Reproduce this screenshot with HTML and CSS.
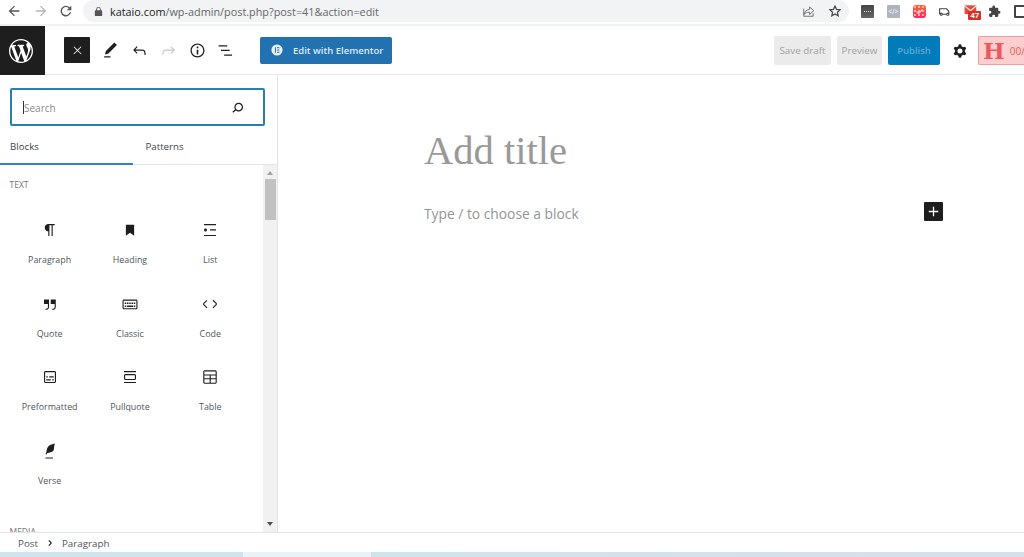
FILE: index.html
```html
<!DOCTYPE html>
<html lang="en">
<head>
    <meta charset="UTF-8">
    <title>Add New Post</title>
    <link rel="stylesheet" href="styles.css">
</head>
<body>

<!-- browser toolbar -->
<div class="browser-bar">
    <div class="nav-buttons">
        <svg class="nav-icon" viewBox="0 0 24 24"><path d="M20 11H7.8l5.6-5.6L12 4l-8 8 8 8 1.4-1.4L7.8 13H20z"/></svg>
        <svg class="nav-icon nav-off" viewBox="0 0 24 24"><path d="M4 11h12.2l-5.6-5.6L12 4l8 8-8 8-1.4-1.4 5.6-5.6H4z"/></svg>
        <svg class="nav-icon nav-reload" viewBox="0 0 24 24"><path d="M17.6 6.4A8 8 0 1 0 19.7 14h-2.1a6 6 0 1 1-1.4-6.2L13 11h7V4z"/></svg>
    </div>
    <div class="omnibox">
        <svg class="lock" viewBox="0 0 24 24"><path d="M18 9h-1V7a5 5 0 0 0-10 0v2H6a2 2 0 0 0-2 2v9a2 2 0 0 0 2 2h12a2 2 0 0 0 2-2v-9a2 2 0 0 0-2-2zM9 7a3 3 0 0 1 6 0v2H9z"/></svg>
        <span class="url"><span class="url-host">kataio.com</span>/wp-admin/post.php?post=41&amp;action=edit</span>
        <svg class="omni-icon share" viewBox="0 0 24 24"><path d="M13 5v4C7 10 4 14 3.5 18c2.5-3 5-4 9.5-4v4l7-6.500z M3 8v13h16v-5" fill="none" stroke="#5f6368" stroke-width="1.5"/></svg>
        <svg class="omni-icon" viewBox="0 0 24 24"><path d="M12 3.5l2.6 5.7 6.2.7-4.600 4.200 1.300 6.100-5.500-3.100-5.500 3.100 1.300-6.100-4.600-4.200 6.200-.7z" fill="none" stroke="#444" stroke-width="2"/></svg>
    </div>
    <div class="extensions">
        <span class="ext ext-dark"><i></i></span>
        <span class="ext ext-code">&lt;/&gt;</span>
        <span class="ext ext-red">
            <svg viewBox="0 0 13 13"><path d="M3.5 6.5l2 2 4-4" fill="none" stroke="#ffd9c9" stroke-width="1.2"/></svg>
        </span>
        <svg class="ext-svg" viewBox="0 0 24 24"><path d="M3 17V7h13l4 5v5M8 17h8" fill="none" stroke="#444" stroke-width="2"/><circle cx="6" cy="17" r="2" fill="none" stroke="#444" stroke-width="2"/><circle cx="18" cy="17" r="2" fill="none" stroke="#444" stroke-width="2"/></svg>
        <span class="ext-mail">
            <svg viewBox="0 0 24 20"><path d="M1 2h20v15H1z" fill="#e8493c"/><path d="M1 3l10 8 10-8" fill="none" stroke="#fff" stroke-width="2"/></svg>
            <b class="mail-count">47</b>
        </span>
        <svg class="ext-svg ext-puzzle" viewBox="0 0 24 24"><path fill="#444" d="M20.5 11H19V7a2 2 0 0 0-2-2h-4V3.5a2.5 2.5 0 0 0-5 0V5H4a2 2 0 0 0-2 2v3.8h1.5a2.700 2.700 0 0 1 0 5.400H2V20a2 2 0 0 0 2 2h3.800v-1.500a2.700 2.700 0 0 1 5.400 0V22H17a2 2 0 0 0 2-2v-4h1.500a2.500 2.500 0 0 0 0-5z"/></svg>
        <span class="ext-window"></span>
    </div>
</div>

<!-- editor top bar -->
<header class="editor-header">
    <a class="wp-logo">
        <svg viewBox="0 0 20 20"><path fill="#fff" d="M20 10c0-5.510-4.490-10-10-10C4.480 0 0 4.490 0 10c0 5.520 4.480 10 10 10 5.510 0 10-4.480 10-10zM7.780 15.370L4.370 6.220c.55-.02 1.170-.08 1.170-.08.5-.06.44-1.130-.06-1.110 0 0-1.450.11-2.370.11-.18 0-.37 0-.58-.01C4.120 2.690 6.870 1.110 10 1.110c2.330 0 4.450.87 6.050 2.340-.68-.11-1.650.39-1.650 1.580 0 .74.45 1.360.9 2.100.35.61.55 1.360.55 2.460 0 1.490-1.400 5-1.400 5l-3.030-8.370c.54-.02.82-.17.82-.17.5-.05.44-1.250-.06-1.220 0 0-1.440.12-2.380.12-.87 0-2.330-.12-2.330-.12-.5-.03-.56 1.200-.06 1.220l.92.08 1.260 3.410zM17.410 10c.24-.64.74-1.870.43-4.250.7 1.290 1.050 2.710 1.050 4.250 0 3.290-1.730 6.240-4.400 7.780.97-2.590 1.940-5.200 2.920-7.780zM6.100 18.090C3.120 16.650 1.110 13.530 1.110 10c0-1.300.23-2.480.72-3.590C3.250 10.300 4.670 14.200 6.100 18.090zm4.030-6.630l2.580 6.980c-.86.29-1.760.45-2.710.45-.79 0-1.570-.11-2.290-.33.81-2.380 1.620-4.740 2.420-7.100z"/></svg>
    </a>
    <div class="header-tools">
        <button class="close-btn">
            <svg viewBox="0 0 24 24"><path fill="#fff" d="M13 11.800l6.100-6.300-1-1-6.100 6.200-6.100-6.200-1 1 6.100 6.300-6.500 6.200 1 1 6.500-6.300 6.500 6.300 1-1z"/></svg>
        </button>
        <svg class="tool-icon" viewBox="0 0 24 24"><path d="M20.100 5.100L16.900 2 6.200 12.700l-1.300 4.400 4.500-1.300L20.100 5.100zM4 20.800h8v-1.500H4v1.500z"/></svg>
        <svg class="tool-icon" viewBox="0 0 24 24"><path d="M18.300 11.700c-.6-.6-1.400-.9-2.300-.9H6.700l2.900-3.300-1.100-1-4.500 5L8.500 16l1-1-2.700-2.700H16c.5 0 .9.2 1.300.5 1 1 1 3.400 1 4.500v.3h1.500v-.2c0-1.500 0-4.300-1.500-5.700z"/></svg>
        <svg class="tool-icon tool-off" viewBox="0 0 24 24"><path d="M15.600 6.500l-1.100 1 2.900 3.300H8c-.9 0-1.700.3-2.300.9-1.400 1.500-1.400 4.200-1.400 5.600v.2h1.500v-.3c0-1.100 0-3.500 1-4.500.3-.3.7-.5 1.300-.5h9.200L14.500 15l1.100 1.100 4.600-4.600-4.600-5z"/></svg>
        <svg class="tool-icon" viewBox="0 0 24 24"><path d="M12 3.200c-4.800 0-8.800 3.900-8.800 8.800 0 4.800 3.900 8.800 8.800 8.800 4.800 0 8.800-3.900 8.800-8.800 0-4.800-4-8.800-8.800-8.800zm0 16c-4 0-7.200-3.300-7.200-7.200C4.800 8 8 4.800 12 4.800s7.200 3.300 7.200 7.200c0 4-3.200 7.200-7.200 7.200zM11 17h2v-6h-2v6zm0-8h2V7h-2v2z"/></svg>
        <svg class="tool-icon tool-list" viewBox="0 0 24 24"><path d="M2 5.500h11V7H2zM5 11.200h11v1.500H5zM9 17h10v1.500H9z"/></svg>
        <button class="elementor-btn">
            <svg viewBox="0 0 20 20"><path fill="#eaf3fa" fill-rule="evenodd" d="M10 2a8 8 0 1 0 0 16 8 8 0 0 0 0-16zM7 6h1.500v8H7zm3 0h3.500v1.500H10zm0 3.200h3.500v1.500H10zm0 3.300h3.500V14H10z"/></svg>
            Edit with Elementor
        </button>
    </div>
    <div class="header-actions">
        <button class="btn-grey btn-save">Save draft</button>
        <button class="btn-grey btn-preview">Preview</button>
        <button class="btn-publish">Publish</button>
        <svg class="cog" viewBox="0 0 24 24"><path fill-rule="evenodd" d="M10.289 4.836A1 1 0 0111.275 4h1.306a1 1 0 01.987.836l.244 1.466c.787.26 1.503.679 2.108 1.218l1.393-.522a1 1 0 011.216.437l.653 1.130a1 1 0 01-.23 1.273l-1.148.944a6.025 6.025 0 010 2.435l1.149.946a1 1 0 01.23 1.272l-.653 1.130a1 1 0 01-1.216.437l-1.394-.522c-.605.54-1.320.958-2.108 1.218l-.244 1.466a1 1 0 01-.987.836h-1.306a1 1 0 01-.986-.836l-.244-1.466a5.995 5.995 0 01-2.108-1.218l-1.394.522a1 1 0 01-1.217-.436l-.653-1.131a1 1 0 01.23-1.272l1.149-.946a6.026 6.026 0 010-2.435l-1.148-.944a1 1 0 01-.23-1.272l.653-1.131a1 1 0 011.217-.437l1.393.522a5.994 5.994 0 012.108-1.218l.244-1.466zM14.929 12a3 3 0 11-6 0 3 3 0 016 0z"/></svg>
        <div class="h-badge"><span class="h-letter">H</span><span class="h-count">00/</span></div>
    </div>
</header>

<div class="editor-body">
    <!-- block inserter -->
    <aside class="inserter">
        <div class="search-box">
            <span class="caret"></span>
            <span class="search-text">Search</span>
            <svg class="search-icon" viewBox="0 0 24 24"><path d="M13.500 6C10.500 6 8 8.500 8 11.500c0 1.100.3 2.100.9 3l-3.400 3 1 1.100 3.400-2.900c1 .9 2.200 1.400 3.600 1.400 3 0 5.500-2.500 5.500-5.500C19 8.500 16.500 6 13.500 6zm0 9.500c-2.200 0-4-1.800-4-4s1.800-4 4-4 4 1.800 4 4-1.800 4-4 4z"/></svg>
        </div>
        <div class="tabs">
            <div class="tab tab-active">Blocks</div>
            <div class="tab">Patterns</div>
        </div>
        <div class="block-panel">
            <div class="block-list">
                <div class="group-title">TEXT</div>
                <div class="block-grid">
                    <div class="block-item">
                        <svg viewBox="0 0 24 24"><path d="M18.300 4H9.900v-.1l-.9.2c-2.300.4-4 2.400-4 4.800s1.700 4.400 4 4.800l.7.1V20h1.500V5.500h2.900V20h1.500V5.500h2.700V4z"/></svg>
                        <span>Paragraph</span>
                    </div>
                    <div class="block-item">
                        <svg viewBox="0 0 24 24"><path d="M6.500 5h11v14.500L12 15.600l-5.500 3.900z"/></svg>
                        <span>Heading</span>
                    </div>
                    <div class="block-item">
                        <svg viewBox="0 0 24 24"><path d="M4 4v1.500h16V4H4zm8 8.500h8V11h-8v1.500zM4 20h16v-1.500H4V20zm4-8c0-1.100-.9-2-2-2s-2 .9-2 2 .9 2 2 2 2-.9 2-2z"/></svg>
                        <span>List</span>
                    </div>
                    <div class="block-item">
                        <svg viewBox="0 0 24 24"><path d="M13 6v6h5.200v4c0 .8-.2 1.400-.5 1.700-.6.6-1.600.6-2.500.5h-.3v1.500h.5c1 0 2.300-.1 3.300-1 .6-.6 1-1.600 1-2.800V6H13zm-9 6h5.200v4c0 .8-.2 1.400-.5 1.700-.6.6-1.600.6-2.500.5h-.3v1.500h.5c1 0 2.300-.1 3.300-1 .6-.6 1-1.600 1-2.800V6H4v6z"/></svg>
                        <span>Quote</span>
                    </div>
                    <div class="block-item">
                        <svg viewBox="0 0 24 24"><path d="M20 6H4c-1.100 0-2 .9-2 2v9c0 1.100.9 2 2 2h16c1.100 0 2-.9 2-2V8c0-1.100-.9-2-2-2zm.5 11c0 .3-.2.5-.5.5H4c-.3 0-.5-.2-.5-.5V8c0-.3.2-.5.5-.5h16c.3 0 .5.2.5.5v9zM10 10H8v2h2v-2zm-5 2h2v-2H5v2zm8-2h-2v2h2v-2zm-5 6h8v-2H8v2zm6-4h2v-2h-2v2zm3 0h2v-2h-2v2zm0 4h2v-2h-2v2zM5 16h2v-2H5v2z"/></svg>
                        <span>Classic</span>
                    </div>
                    <div class="block-item">
                        <svg viewBox="0 0 24 24"><path d="M20.800 10.700l-4.300-4.300-1.100 1.100 4.300 4.300c.1.1.1.3 0 .4l-4.300 4.300 1.100 1.100 4.300-4.300c.7-.8.7-1.900 0-2.600zM4.200 11.800l4.300-4.300-1-1-4.300 4.300c-.7.7-.7 1.800 0 2.500l4.300 4.300 1.100-1.100-4.300-4.300c-.2-.1-.2-.3-.1-.4z"/></svg>
                        <span>Code</span>
                    </div>
                    <div class="block-item">
                        <svg viewBox="0 0 24 24"><path d="M18 4H6c-1.100 0-2 .9-2 2v12c0 1.100.9 2 2 2h12c1.100 0 2-.9 2-2V6c0-1.100-.9-2-2-2zm.5 14c0 .3-.2.5-.5.5H6c-.3 0-.5-.2-.5-.5V6c0-.3.2-.5.5-.5h12c.3 0 .5.2.5.5v12zM7 16.500h6V15H7v1.500zm4-4h6V11h-6v1.500zM9 11H7v1.500h2V11zm6 5.500h2V15h-2v1.500z"/></svg>
                        <span>Preformatted</span>
                    </div>
                    <div class="block-item">
                        <svg viewBox="0 0 24 24"><path d="M18 8H6c-1.100 0-2 .9-2 2v4c0 1.100.9 2 2 2h12c1.100 0 2-.9 2-2v-4c0-1.100-.9-2-2-2zm.5 6c0 .3-.2.5-.5.5H6c-.3 0-.5-.2-.5-.5v-4c0-.3.2-.5.5-.5h12c.3 0 .5.2.5.5v4zM4 4v1.500h16V4H4zm0 16h16v-1.500H4V20z"/></svg>
                        <span>Pullquote</span>
                    </div>
                    <div class="block-item">
                        <svg viewBox="0 0 24 24"><path d="M19 3H5c-1.100 0-2 .9-2 2v14c0 1.100.9 2 2 2h14c1.100 0 2-.9 2-2V5c0-1.100-.9-2-2-2zM5 4.500h14c.3 0 .5.2.5.5v3.500h-15V5c0-.3.2-.5.5-.5zm8 5.500h6.500v3.500H13V10zm-1.500 3.500h-7V10h7v3.500zm-7 5.500v-4h7v4.500H5c-.3 0-.5-.2-.5-.5zm14.500.5h-6V15h6.500v4c0 .3-.2.5-.5.5z"/></svg>
                        <span>Table</span>
                    </div>
                    <div class="block-item">
                        <svg viewBox="0 0 24 24"><path d="M17.800 2l-.9.3c-.1 0-3.600 1-5.200 2.100C10 5.500 9.300 6.500 8.900 7.100c-.6.9-1.700 4.700-1.700 6.300l-.9 2.300c-.2.400 0 .8.4 1 .1 0 .2.100.3.100.3 0 .6-.2.7-.5l.6-1.500c.3 0 .7-.1 1.200-.2.700-.1 1.400-.3 2.200-.5.8-.2 1.600-.5 2.400-.8.700-.3 1.400-.7 1.900-1.200s.8-1.200 1-1.900c.2-.7.3-1.600.4-2.400.1-.8.1-1.700.2-2.300.1-.7.2-1.200.4-1.600l.4-.8zM6 20.500h10V22H6z"/></svg>
                        <span>Verse</span>
                    </div>
                </div>
                <div class="group-title group-media">MEDIA</div>
            </div>
            <div class="scrollbar">
                <span class="arrow-up"></span>
                <span class="thumb"></span>
                <span class="arrow-down"></span>
            </div>
        </div>
    </aside>

    <!-- post content -->
    <main class="canvas">
        <div class="post-area">
            <h1 class="post-title">Add title</h1>
            <div class="block-row">
                <p class="placeholder">Type / to choose a block</p>
                <button class="add-block">
                    <svg viewBox="0 0 24 24"><path fill="#fff" d="M18 11.200h-5.200V6h-1.600v5.200H6v1.600h5.200V18h1.600v-5.200H18z"/></svg>
                </button>
            </div>
        </div>
    </main>
</div>

<footer class="breadcrumb">
    <span>Post</span>
    <svg class="crumb-sep" viewBox="0 0 24 24"><path d="M10.600 6L8.800 7.500l4.200 4.500-4.200 4.500L10.600 18l5.400-6z"/></svg>
    <span>Paragraph</span>
</footer>

<div class="bottom-strip">
    <span class="strip-a"></span>
    <span class="strip-b"></span>
    <span class="strip-c"></span>
</div>

</body>
</html>
```

FILE: styles.css
```css
* {
    box-sizing: border-box;
}
body {
    margin: 0;
    height: 557px;
    overflow: hidden;
    display: flex;
    flex-direction: column;
    background-color: #fff;
    color: #1e1e1e;
    font-family: "Open Sans", "Noto Sans", sans-serif;
}
button {
    font-family: inherit;
    border: none;
    padding: 0;
}

/* browser toolbar */
.browser-bar {
    height: 26px;
    flex: none;
    display: flex;
    align-items: flex-start;
    background-color: #fff;
    border-bottom: 2px solid #f0f1f2;
}
.nav-buttons {
    width: 83px;
    height: 24px;
    flex: none;
    display: flex;
    align-items: center;
    gap: 11px;
    padding-left: 6px;
    padding-bottom: 2px;
}
.nav-icon {
    width: 16px;
    height: 16px;
    fill: #555;
}
.nav-off {
    fill: #b5b5b5;
}
.nav-reload {
    margin-left: -2px;
}
.omnibox {
    width: 766px;
    height: 22px;
    flex: none;
    display: flex;
    align-items: center;
    padding: 0 7px 0 10px;
    background-color: #f1f3f4;
    border-radius: 11px;
}
.lock {
    width: 11px;
    height: 11px;
    fill: #555;
}
.url {
    margin-left: 6px;
    font-size: 10.85px;
    color: #666;
    flex: 1;
}
.url-host {
    color: #222;
}
.omni-icon {
    width: 14px;
    height: 14px;
}
.share {
    margin-right: 12px;
}
.extensions {
    flex: 1;
    height: 22px;
    display: flex;
    align-items: center;
    gap: 12.8px;
    padding-left: 12px;
    overflow: hidden;
}
.ext {
    width: 13px;
    height: 13px;
    flex: none;
    border-radius: 1px;
}
.ext-dark {
    background-image: linear-gradient(#444, #666);
    display: flex;
    align-items: center;
    justify-content: center;
}
.ext-dark i {
    width: 7px;
    border-top: 1px dotted #ddd;
}
.ext-code {
    background-color: #aeb4c0;
    color: #fff;
    font-size: 7px;
    line-height: 13px;
    text-align: center;
}
.ext-red {
    border-radius: 3px;
    background-image: radial-gradient(#ffb199 1px, transparent 1px), linear-gradient(#fb6a3a, #f5276c);
    background-size: 4px 4px, 100% 100%;
}
.ext-red svg {
    display: block;
}
.ext-svg {
    width: 13px;
    height: 13px;
    flex: none;
}
.ext-puzzle {
    margin-left: -3px;
}
.ext-mail {
    position: relative;
    width: 14px;
    height: 13px;
    flex: none;
    margin-top: -2px;
}
.ext-mail svg {
    display: block;
    width: 14px;
    height: 12px;
}
.mail-count {
    position: absolute;
    left: 4px;
    top: 7px;
    width: 13px;
    height: 9px;
    background-color: #d93025;
    color: #fff;
    border-radius: 1px;
    font-size: 7.5px;
    line-height: 9px;
    text-align: center;
}
.ext-window {
    width: 12px;
    height: 13px;
    flex: none;
    border: 2px solid #444;
    border-radius: 1px;
}

/* editor top bar */
.editor-header {
    height: 49px;
    flex: none;
    display: flex;
    align-items: center;
    background-color: #fff;
    border-bottom: 1px solid #e8e8e8;
}
.wp-logo {
    width: 45px;
    height: 49px;
    flex: none;
    display: flex;
    align-items: center;
    justify-content: center;
    padding: 1px 3px 0 0;
    background-color: #1e1e1e;
}
.wp-logo svg {
    width: 24px;
    height: 24px;
}
.header-tools {
    display: flex;
    align-items: center;
    margin-left: 19px;
}
.close-btn {
    width: 26px;
    height: 26px;
    display: flex;
    align-items: center;
    justify-content: center;
    margin-right: 11px;
    background-color: #1e1e1e;
    border-radius: 1px;
}
.close-btn svg {
    width: 13px;
    height: 13px;
}
.tool-icon {
    width: 19px;
    height: 19px;
    margin-right: 10px;
    fill: #1e1e1e;
}
.tool-off {
    fill: #c8c8c8;
}
.tool-list {
    margin-right: 8px;
}
.elementor-btn {
    display: flex;
    align-items: center;
    gap: 9px;
    width: 132px;
    height: 27px;
    margin-left: 16px;
    padding-left: 10px;
    background-color: #2271b1;
    border-radius: 2px;
    color: #dfeaf3;
    font-size: 9.5px;
    font-weight: 600;
}
.elementor-btn svg {
    width: 14px;
    height: 14px;
}
.header-actions {
    margin-left: auto;
    display: flex;
    align-items: center;
    padding-top: 1px;
}
.btn-grey {
    height: 29px;
    background-color: #ebebeb;
    color: #a0a0a0;
    font-size: 9.8px;
    border-radius: 2px;
}
.btn-save {
    width: 57px;
    margin-right: 6px;
}
.btn-preview {
    width: 45px;
    margin-right: 6px;
}
.btn-publish {
    width: 52px;
    height: 29px;
    background-color: #007cba;
    color: #5fa8d2;
    font-size: 9.5px;
    font-weight: 600;
    border-radius: 2px;
}
.cog {
    width: 20px;
    height: 20px;
    margin: 0 8px 0 10px;
    fill: #1e1e1e;
}
.h-badge {
    width: 46px;
    height: 29px;
    display: flex;
    align-items: center;
    overflow: hidden;
    padding-left: 4px;
    background-color: #fbcfcf;
    border: 1px solid #f29c9c;
    border-right: none;
    border-radius: 2px 0 0 2px;
    color: #eb5a5a;
    white-space: nowrap;
}
.h-letter {
    font-family: "DejaVu Serif", serif;
    font-weight: bold;
    font-size: 23px;
    line-height: 27px;
}
.h-count {
    margin-left: 5px;
    font-size: 10px;
}

/* main area */
.editor-body {
    flex: 1;
    min-height: 0;
    display: flex;
}
.inserter {
    width: 278px;
    flex: none;
    display: flex;
    flex-direction: column;
    border-right: 1px solid #e4e4e4;
}
.search-box {
    height: 38px;
    flex: none;
    display: flex;
    align-items: center;
    margin: 13px 12px 0 10px;
    padding: 0 16px 0 11px;
    border: 2px solid #2a7fae;
    border-radius: 2px;
}
.caret {
    width: 1px;
    height: 13px;
    background-color: #333;
}
.search-text {
    flex: 1;
    padding-top: 1px;
    font-size: 10px;
    color: #8a8a8a;
}
.search-icon {
    width: 19px;
    height: 19px;
    fill: #1e1e1e;
}
.tabs {
    height: 39px;
    flex: none;
    display: flex;
    border-bottom: 1px solid #e4e4e4;
}
.tab {
    width: 132.5px;
    padding: 14px 0 0 10px;
    font-size: 9.7px;
    font-weight: 500;
    color: #3c434a;
}
.tab + .tab {
    padding-left: 13px;
}
.tab-active {
    height: 39px;
    border-bottom: 2px solid #2a88bd;
}
.block-panel {
    flex: 1;
    min-height: 0;
    display: flex;
}
.block-list {
    flex: 1;
    overflow: hidden;
    padding: 0 9.5px;
}
.group-title {
    padding: 14px 0 0 0;
    height: 40px;
    font-size: 8.5px;
    color: #757575;
}
.block-grid {
    display: grid;
    grid-template-columns: repeat(3, 80.3px);
    grid-auto-rows: 73.6px;
}
.block-item {
    display: flex;
    flex-direction: column;
    align-items: center;
    padding-top: 16px;
    font-size: 8.9px;
    color: #50575e;
}
.block-item svg {
    width: 18px;
    height: 18px;
    fill: #1e1e1e;
    margin-bottom: 14px;
}
.group-media {
    margin-top: 13px;
}
.scrollbar {
    width: 14px;
    flex: none;
    display: flex;
    flex-direction: column;
    align-items: center;
    background-color: #f1f1f1;
}
.arrow-up {
    margin-top: 6px;
    border: 3px solid transparent;
    border-top: none;
    border-bottom: 4px solid #a3a3a3;
}
.thumb {
    width: 11px;
    height: 41px;
    margin-top: 4px;
    background-color: #c1c1c1;
}
.arrow-down {
    margin-top: auto;
    margin-bottom: 6px;
    border: 3px solid transparent;
    border-bottom: none;
    border-top: 4px solid #505050;
}

/* post content */
.canvas {
    flex: 1;
    min-width: 0;
}
.post-area {
    margin-left: 146px;
    width: 519px;
}
.post-title {
    margin: 49px 0 0;
    font-family: "Liberation Serif", serif;
    font-weight: normal;
    font-size: 40.6px;
    line-height: 54px;
    color: #999;
}
.block-row {
    display: flex;
    align-items: center;
    justify-content: space-between;
    margin-top: 26px;
}
.placeholder {
    margin: 0;
    font-size: 13.8px;
    line-height: 20px;
    color: #949494;
}
.add-block {
    width: 19px;
    height: 19px;
    display: flex;
    align-items: center;
    justify-content: center;
    margin-top: -5px;
    background-color: #1e1e1e;
    border-radius: 1px;
}
.add-block svg {
    width: 19px;
    height: 19px;
}

/* breadcrumb */
.breadcrumb {
    height: 20px;
    flex: none;
    display: flex;
    align-items: center;
    gap: 6px;
    padding: 1px 0 0 18px;
    background-color: #fff;
    border-top: 1px solid #e2e4e7;
    font-size: 9.8px;
    color: #50575e;
}
.crumb-sep {
    width: 12px;
    height: 12px;
    fill: #1e1e1e;
}
.bottom-strip {
    height: 5px;
    flex: none;
    display: flex;
}
.strip-a {
    width: 243px;
    background-color: #cfe4ec;
}
.strip-b {
    width: 128px;
    background-color: #e8f3f8;
}
.strip-c {
    flex: 1;
    background-image: linear-gradient(to right, #cfe4ec, #d6dfec);
}
```
